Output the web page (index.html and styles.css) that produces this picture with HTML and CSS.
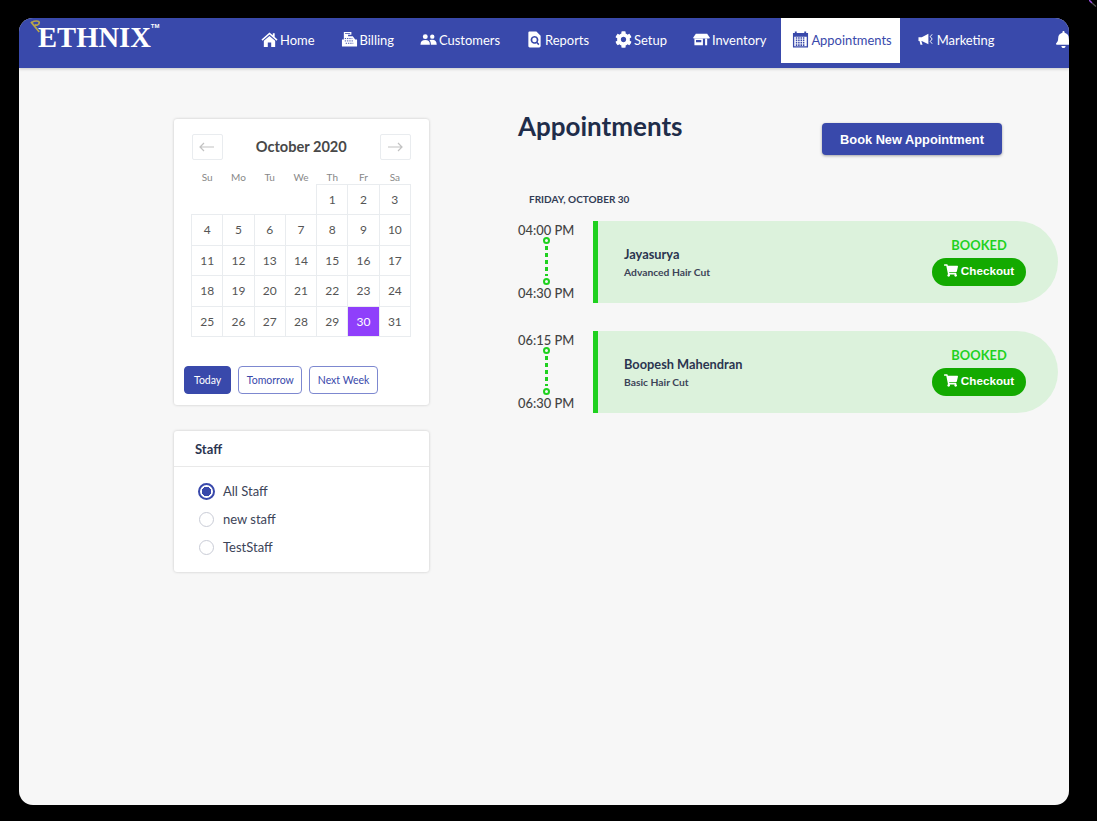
FILE: index.html
```html
<!DOCTYPE html>
<html lang="en">
<head>
    <meta charset="UTF-8">
    <meta name="viewport" content="width=device-width, initial-scale=1.0">
    <title>Ethnix Appointments</title>
    <link rel="stylesheet" href="styles.css">
</head>
<body>

    <svg class="corner-arc" viewBox="0 0 8 8"><path d="M0 0 L3 3" stroke="#9a4fe0" stroke-width="1.5"/><path d="M3 3 L7 6.5" stroke="#555" stroke-width="1.2"/></svg>

    <div class="window">
        <div class="navbar">
            <div class="logo">
                <svg class="logo-mark" viewBox="0 0 14 14"><path d="M1 2 L10 13 M2 2.5 C5 0.5 10 0.5 10 3 C10 5.5 6.5 6 5 5" fill="none" stroke="#b9a64a" stroke-width="1.8"/></svg>
                <span class="logo-text">ETHNIX</span><span class="logo-tm">TM</span>
            </div>

            <a class="nav-item">
                <svg class="nav-icon" viewBox="0 0 18 18"><path d="M9 1.5 L0.5 9 L1.6 10.2 L9 3.8 L16.4 10.2 L17.5 9 L14.5 6.3 V2.5 H12.5 V4.6 Z"/><path d="M9 5.2 L3 10.4 V17 H7.2 V12.2 H10.8 V17 H15 V10.4 Z"/></svg>
                Home
            </a>
            <a class="nav-item">
                <svg class="nav-icon" viewBox="0 0 18 18"><path d="M3 1 H11 V4 H7.5 V5.5 H12.5 L15 9 H17 V16.5 H1 V9 H3 Z M4.3 2.2 V2.9 H9.7 V2.2 Z"/><path d="M4 8 H12 M4 10.5 H13 M5 13 H13" stroke="#3949ab" stroke-width="1" stroke-dasharray="1.4 1"/></svg>
                Billing
            </a>
            <a class="nav-item">
                <svg class="nav-icon" viewBox="0 0 18 18"><circle cx="5.6" cy="6" r="2.6"/><circle cx="13" cy="6" r="2.3"/><path d="M0.5 14.5 C0.5 11 2.5 9.5 5.6 9.5 C8.7 9.5 10.5 11 10.5 14.5 Z"/><path d="M11.5 14.5 C11.5 12.3 11 10.7 10 9.7 C11 9.3 12 9.3 13 9.3 C16 9.3 17.7 11 17.7 14.5 Z"/></svg>
                Customers
            </a>
            <a class="nav-item">
                <svg class="nav-icon" viewBox="0 0 18 18"><path fill-rule="evenodd" d="M4 0.5 H11 L15.5 5 V16 C15.5 17 14.7 17.5 14 17.5 H4 C3 17.5 2.5 16.8 2.5 16 V2 C2.5 1 3 0.5 4 0.5 Z M9 5.2 A4.2 4.2 0 1 0 11.2 13 L13 15 L14.2 13.8 L12.4 11.8 A4.2 4.2 0 0 0 9 5.2 Z M9 7 A2.4 2.4 0 1 1 9 11.8 A2.4 2.4 0 0 1 9 7 Z"/></svg>
                Reports
            </a>
            <a class="nav-item">
                <svg class="nav-icon" viewBox="0 0 512 512"><path d="M487.4 315.7l-42.6-24.6c4.3-23.2 4.3-47 0-70.2l42.6-24.6c4.9-2.8 7.1-8.6 5.5-14-11.1-35.6-30-67.8-54.7-94.6-3.8-4.1-10-5.1-14.8-2.3L380.8 110c-17.9-15.4-38.5-27.3-60.8-35.1V25.8c0-5.6-3.9-10.5-9.4-11.7-36.7-8.2-74.3-7.8-109.2 0-5.5 1.2-9.4 6.1-9.4 11.7V75c-22.2 7.9-42.8 19.8-60.8 35.1L88.7 85.5c-4.9-2.8-11-1.9-14.8 2.3-24.7 26.7-43.6 58.9-54.7 94.6-1.7 5.4.6 11.2 5.5 14L67.3 221c-4.3 23.2-4.3 47 0 70.2l-42.6 24.6c-4.9 2.8-7.1 8.6-5.5 14 11.1 35.6 30 67.8 54.7 94.6 3.8 4.1 10 5.1 14.8 2.3l42.6-24.6c17.9 15.4 38.5 27.3 60.8 35.1v49.2c0 5.6 3.9 10.5 9.4 11.7 36.7 8.2 74.3 7.8 109.2 0 5.5-1.2 9.4-6.1 9.4-11.7v-49.2c22.2-7.9 42.8-19.8 60.8-35.1l42.6 24.6c4.9 2.8 11 1.9 14.8-2.3 24.7-26.7 43.6-58.9 54.7-94.6 1.5-5.5-.7-11.3-5.6-14.1zM256 336c-44.1 0-80-35.9-80-80s35.9-80 80-80 80 35.9 80 80-35.9 80-80 80z"/></svg>
                Setup
            </a>
            <a class="nav-item">
                <svg class="nav-icon" viewBox="0 0 18 18"><path d="M3 3 H15 L17.5 6.5 V8 H0.5 V6.5 Z"/><path fill-rule="evenodd" d="M1.5 8 H10.5 V15 H1.5 Z M3.2 9.4 V12 H8.8 V9.4 Z"/><path d="M12.8 8 H15 V15 H12.8 Z"/></svg>
                Inventory
            </a>
            <a class="nav-item active">
                <svg class="nav-icon" viewBox="0 0 18 18"><path fill-rule="evenodd" d="M3 0.5 H5 V2 H13 V0.5 H15 V2 H17 V17.5 H1 V2 H3 Z M2.4 6 V16.1 H15.6 V6 Z"/><path d="M4 7.4 H14 M4 9.9 H14 M4 12.4 H14 M4 14.9 H14" stroke="#3949ab" stroke-width="1.7" stroke-dasharray="1.6 .9"/></svg>
                Appointments
            </a>
            <a class="nav-item">
                <svg class="nav-icon" viewBox="0 0 18 18"><path d="M0.5 6.5 H4 L11 3 V14 L4 10.5 H3.6 L4.8 14.5 H2.6 L1.6 10.5 H0.5 Z"/><path d="M15 3.5 L13 6 L15 8.5 L13 11 L15 13.5" fill="none" stroke="#fff" stroke-width="1"/></svg>
                Marketing
            </a>
            <svg class="nav-bell" viewBox="0 0 448 512"><path d="M224 512c35.32 0 63.97-28.65 63.97-64H160.03c0 35.35 28.65 64 63.97 64zm215.39-149.71c-19.32-20.76-55.47-51.99-55.47-154.29 0-77.7-54.48-139.9-127.94-155.16V32c0-17.67-14.32-32-31.98-32s-31.98 14.33-31.98 32v20.84C118.56 68.1 64.08 130.3 64.08 208c0 102.3-36.15 133.53-55.47 154.29-6 6.45-8.66 14.16-8.61 21.71.11 16.4 12.98 32 32.1 32h383.8c19.12 0 32-15.6 32.1-32 .05-7.55-2.61-15.27-8.61-21.71z"/></svg>
        </div>

        <div class="content">
            <div class="left-col">
                <div class="card calendar-card">
                    <div class="cal-head">
                        <button class="cal-arrow">
                            <svg viewBox="0 0 16 10"><path d="M15 5 H1 M5 1 L1 5 L5 9"/></svg>
                        </button>
                        <span class="cal-title">October 2020</span>
                        <button class="cal-arrow">
                            <svg viewBox="0 0 16 10"><path d="M1 5 H15 M11 1 L15 5 L11 9"/></svg>
                        </button>
                    </div>
                    <table class="cal-table">
                        <thead>
                            <tr><th>Su</th><th>Mo</th><th>Tu</th><th>We</th><th>Th</th><th>Fr</th><th>Sa</th></tr>
                        </thead>
                        <tbody>
                            <tr><td class="empty"></td><td class="empty"></td><td class="empty"></td><td class="empty"></td><td>1</td><td>2</td><td>3</td></tr>
                            <tr><td>4</td><td>5</td><td>6</td><td>7</td><td>8</td><td>9</td><td>10</td></tr>
                            <tr><td>11</td><td>12</td><td>13</td><td>14</td><td>15</td><td>16</td><td>17</td></tr>
                            <tr><td>18</td><td>19</td><td>20</td><td>21</td><td>22</td><td>23</td><td>24</td></tr>
                            <tr><td>25</td><td>26</td><td>27</td><td>28</td><td>29</td><td class="selected">30</td><td>31</td></tr>
                        </tbody>
                    </table>
                    <div class="quick-btns">
                        <button class="quick-btn primary">Today</button>
                        <button class="quick-btn">Tomorrow</button>
                        <button class="quick-btn">Next Week</button>
                    </div>
                </div>

                <div class="card staff-card">
                    <div class="staff-head">Staff</div>
                    <div class="staff-list">
                        <div class="staff-row"><span class="radio checked"></span>All Staff</div>
                        <div class="staff-row"><span class="radio"></span>new staff</div>
                        <div class="staff-row"><span class="radio"></span>TestStaff</div>
                    </div>
                </div>
            </div>

            <div class="right-col">
                <div class="page-head">
                    <h1>Appointments</h1>
                    <button class="book-btn">Book New Appointment</button>
                </div>
                <div class="date-label">FRIDAY, OCTOBER 30</div>

                <div class="appt">
                    <div class="times">
                        <span>04:00 PM</span>
                        <div class="connector"><i class="ring"></i><i class="dash"></i><i class="ring"></i></div>
                        <span>04:30 PM</span>
                    </div>
                    <div class="appt-card">
                        <div class="appt-info">
                            <div class="appt-name">Jayasurya</div>
                            <div class="appt-service">Advanced Hair Cut</div>
                        </div>
                        <div class="appt-status">
                            <div class="status-text">BOOKED</div>
                            <button class="checkout-btn">
                                <svg viewBox="0 0 576 512"><path d="M528.12 301.319l47.273-208C578.806 78.301 567.391 64 551.99 64H159.208l-9.166-44.81C147.758 8.021 137.93 0 126.529 0H24C10.745 0 0 10.745 0 24v16c0 13.255 10.745 24 24 24h69.883l70.248 343.435C147.325 417.1 136 435.222 136 456c0 30.928 25.072 56 56 56s56-25.072 56-56c0-15.674-6.447-29.835-16.824-40h209.647C430.447 426.165 424 440.326 424 456c0 30.928 25.072 56 56 56s56-25.072 56-56c0-22.172-12.888-41.332-31.579-50.405l5.517-24.276c3.413-15.018-8.002-29.319-23.403-29.319H218.117l-6.545-32h293.145c11.206 0 20.92-7.754 23.403-18.681z"/></svg>
                                Checkout
                            </button>
                        </div>
                    </div>
                </div>

                <div class="appt">
                    <div class="times">
                        <span>06:15 PM</span>
                        <div class="connector"><i class="ring"></i><i class="dash"></i><i class="ring"></i></div>
                        <span>06:30 PM</span>
                    </div>
                    <div class="appt-card">
                        <div class="appt-info">
                            <div class="appt-name">Boopesh Mahendran</div>
                            <div class="appt-service">Basic Hair Cut</div>
                        </div>
                        <div class="appt-status">
                            <div class="status-text">BOOKED</div>
                            <button class="checkout-btn">
                                <svg viewBox="0 0 576 512"><path d="M528.12 301.319l47.273-208C578.806 78.301 567.391 64 551.99 64H159.208l-9.166-44.81C147.758 8.021 137.93 0 126.529 0H24C10.745 0 0 10.745 0 24v16c0 13.255 10.745 24 24 24h69.883l70.248 343.435C147.325 417.1 136 435.222 136 456c0 30.928 25.072 56 56 56s56-25.072 56-56c0-15.674-6.447-29.835-16.824-40h209.647C430.447 426.165 424 440.326 424 456c0 30.928 25.072 56 56 56s56-25.072 56-56c0-22.172-12.888-41.332-31.579-50.405l5.517-24.276c3.413-15.018-8.002-29.319-23.403-29.319H218.117l-6.545-32h293.145c11.206 0 20.92-7.754 23.403-18.681z"/></svg>
                                Checkout
                            </button>
                        </div>
                    </div>
                </div>
            </div>
        </div>
    </div>

</body>
</html>
```

FILE: styles.css
```css
* {
    box-sizing: border-box;
}
html, body {
    height: 100%;
}
body {
    margin: 0;
    padding: 18px 28px 16px 19px;
    background: #000;
    font-family: Lato, "Open Sans", sans-serif;
    overflow: hidden;
}
button {
    font-family: inherit;
    cursor: pointer;
}
.corner-arc {
    position: absolute;
    top: 0;
    right: 0;
    width: 8px;
    height: 8px;
}
.window {
    height: 787px;
    display: flex;
    flex-direction: column;
    background: #f7f7f7;
    border-radius: 14px;
    overflow: hidden;
}

/* top bar */
.navbar {
    height: 50px;
    flex: none;
    display: flex;
    align-items: flex-start;
    gap: 7px;
    background: #3949ab;
    box-shadow: 0 1px 3px rgba(0, 0, 0, 0.2);
    position: relative;
    overflow: hidden;
}
.logo {
    width: 224px;
    height: 45px;
    flex: none;
    padding: 5px 0 0 19px;
    position: relative;
    color: #fff;
    font-family: "Liberation Serif", serif;
    font-weight: bold;
}
.logo-mark {
    position: absolute;
    left: 11px;
    top: 2px;
    width: 13px;
    height: 13px;
}
.logo-text {
    font-size: 28.6px;
    line-height: 29px;
}
.logo-tm {
    font-family: "Liberation Sans", sans-serif;
    font-size: 6px;
    vertical-align: 19px;
}
.nav-item {
    height: 45px;
    display: flex;
    align-items: center;
    gap: 2px;
    padding: 0 8px 2px 11px;
    color: #fff;
    font-size: 12.95px;
}
.nav-item.active {
    background: #fff;
    color: #3949ab;
}
.nav-icon {
    width: 17px;
    height: 17px;
    fill: #fff;
    flex: none;
}
.nav-item.active .nav-icon {
    fill: #3949ab;
}
.nav-bell {
    width: 15px;
    height: 17px;
    fill: #fff;
    flex: none;
    margin: 13px 0 0 46px;
}

/* page body */
.content {
    flex: 1;
    display: flex;
    align-items: flex-start;
    gap: 89px;
    padding: 51px 11px 0 155px;
}
.left-col {
    width: 255px;
    flex: none;
    display: flex;
    flex-direction: column;
    gap: 26px;
}
.right-col {
    flex: 1;
}
.card {
    background: #fff;
    border-radius: 3px;
    box-shadow: 0 0 3px rgba(0, 0, 0, 0.2);
}

/* calendar */
.calendar-card {
    height: 286px;
    padding: 15px 10px 0;
}
.cal-head {
    height: 26px;
    margin: 0 8px 0 7.5px;
    display: flex;
    align-items: center;
    justify-content: space-between;
}
.cal-arrow {
    width: 31px;
    height: 26px;
    padding: 0;
    background: #fff;
    border: 1px solid #e9ecef;
    border-radius: 2px;
}
.cal-arrow svg {
    width: 16px;
    height: 10px;
    fill: none;
    stroke: #c2c2c2;
    stroke-width: 1.2;
}
.cal-title {
    padding-bottom: 2px;
    font-size: 14.6px;
    font-weight: bold;
    color: #484848;
}
.cal-table {
    width: 220px;
    margin: 10px 7px 0;
    border-collapse: collapse;
    table-layout: fixed;
}
.cal-table th {
    height: 14px;
    padding: 0;
    font-size: 10px;
    font-weight: normal;
    color: #888;
}
.cal-table td {
    height: 30.5px;
    padding: 0;
    text-align: center;
    font-size: 12px;
    color: #555;
    border: 1px solid #e9ecef;
}
.cal-table td.empty {
    border: none;
}
.cal-table td.selected {
    background: #8f3ffb;
    color: #fff;
}
.quick-btns {
    display: flex;
    gap: 7px;
    margin-top: 29px;
}
.quick-btn {
    height: 28px;
    padding: 0 7.5px;
    background: #fff;
    border: 1px solid #7d88d0;
    border-radius: 4px;
    color: #3949ab;
    font-size: 10.5px;
}
.quick-btn.primary {
    padding: 0 9px;
    background: #3949ab;
    border-color: #3949ab;
    color: #fff;
}

/* staff filter */
.staff-card {
    height: 141px;
}
.staff-head {
    height: 36px;
    padding: 10px 0 0 21px;
    border-bottom: 1px solid #e9e9e9;
    font-size: 13px;
    font-weight: bold;
    color: #2b3550;
}
.staff-list {
    padding: 10px 0 0 25px;
}
.staff-row {
    height: 28px;
    display: flex;
    align-items: center;
    gap: 9px;
    font-size: 13px;
    color: #3c4458;
}
.radio {
    width: 15px;
    height: 15px;
    border: 1.5px solid #c9ccd6;
    border-radius: 50%;
    background: #fff;
}
.radio.checked {
    width: 17px;
    height: 17px;
    margin: 0 -1px;
    border: 2px solid #3949ab;
    background: radial-gradient(circle, #3949ab 0 4.5px, #fff 5px);
}

/* appointments */
.page-head {
    height: 71px;
    display: flex;
    justify-content: space-between;
    align-items: flex-start;
    padding-right: 56px;
}
h1 {
    margin: -6px 0 0;
    font-size: 26px;
    line-height: 26px;
    font-weight: bold;
    color: #1f2d4a;
}
.book-btn {
    width: 180px;
    height: 32px;
    margin-top: 4px;
    border: none;
    border-radius: 4px;
    background: #3949ab;
    box-shadow: 0 1px 3px rgba(0, 0, 0, 0.35);
    color: #fff;
    font-family: "Liberation Sans", sans-serif;
    font-size: 12.8px;
    font-weight: bold;
}
.date-label {
    height: 31px;
    padding: 3px 0 0 11px;
    font-size: 10px;
    line-height: 13px;
    font-weight: bold;
    color: #323c55;
}
.appt {
    height: 82px;
    margin-bottom: 28px;
    display: flex;
}
.times {
    width: 56px;
    margin-right: 19px;
    padding: 1px 0 2px;
    flex: none;
    display: flex;
    flex-direction: column;
    font-size: 12.9px;
    font-weight: 500;
    line-height: 16px;
    color: #444;
    white-space: nowrap;
}
.connector {
    flex: 1;
    margin-top: -1px;
    display: flex;
    flex-direction: column;
    align-items: center;
}
.ring {
    width: 7px;
    height: 7px;
    flex: none;
    border: 2px solid #1fd11f;
    border-radius: 50%;
}
.dash {
    flex: 1;
    width: 3px;
    margin: 2px 0;
    background: repeating-linear-gradient(#1fd11f 0 4px, transparent 4px 7px);
}
.appt-card {
    flex: 1;
    display: flex;
    align-items: center;
    justify-content: space-between;
    padding: 0 32px 0 26px;
    background: #dcf2dc;
    border-left: 5px solid #1fd11f;
    border-radius: 0 41px 41px 0;
}
.appt-name {
    font-size: 12.8px;
    font-weight: bold;
    color: #2b3550;
}
.appt-service {
    margin-top: 4px;
    font-size: 10.3px;
    font-weight: bold;
    color: #3c4458;
}
.appt-status {
    width: 94px;
    padding-bottom: 2px;
    text-align: center;
}
.status-text {
    font-size: 12.9px;
    font-weight: bold;
    line-height: 16px;
    color: #1fd11f;
}
.checkout-btn {
    width: 94px;
    height: 28px;
    margin-top: 5px;
    padding: 0 0 2px;
    display: flex;
    align-items: center;
    justify-content: center;
    gap: 3px;
    border: none;
    border-radius: 14px;
    background: #13aa00;
    color: #fff;
    font-family: "Liberation Sans", sans-serif;
    font-size: 11.7px;
    font-weight: bold;
}
.checkout-btn svg {
    width: 14px;
    height: 13px;
    fill: #fff;
}
```
